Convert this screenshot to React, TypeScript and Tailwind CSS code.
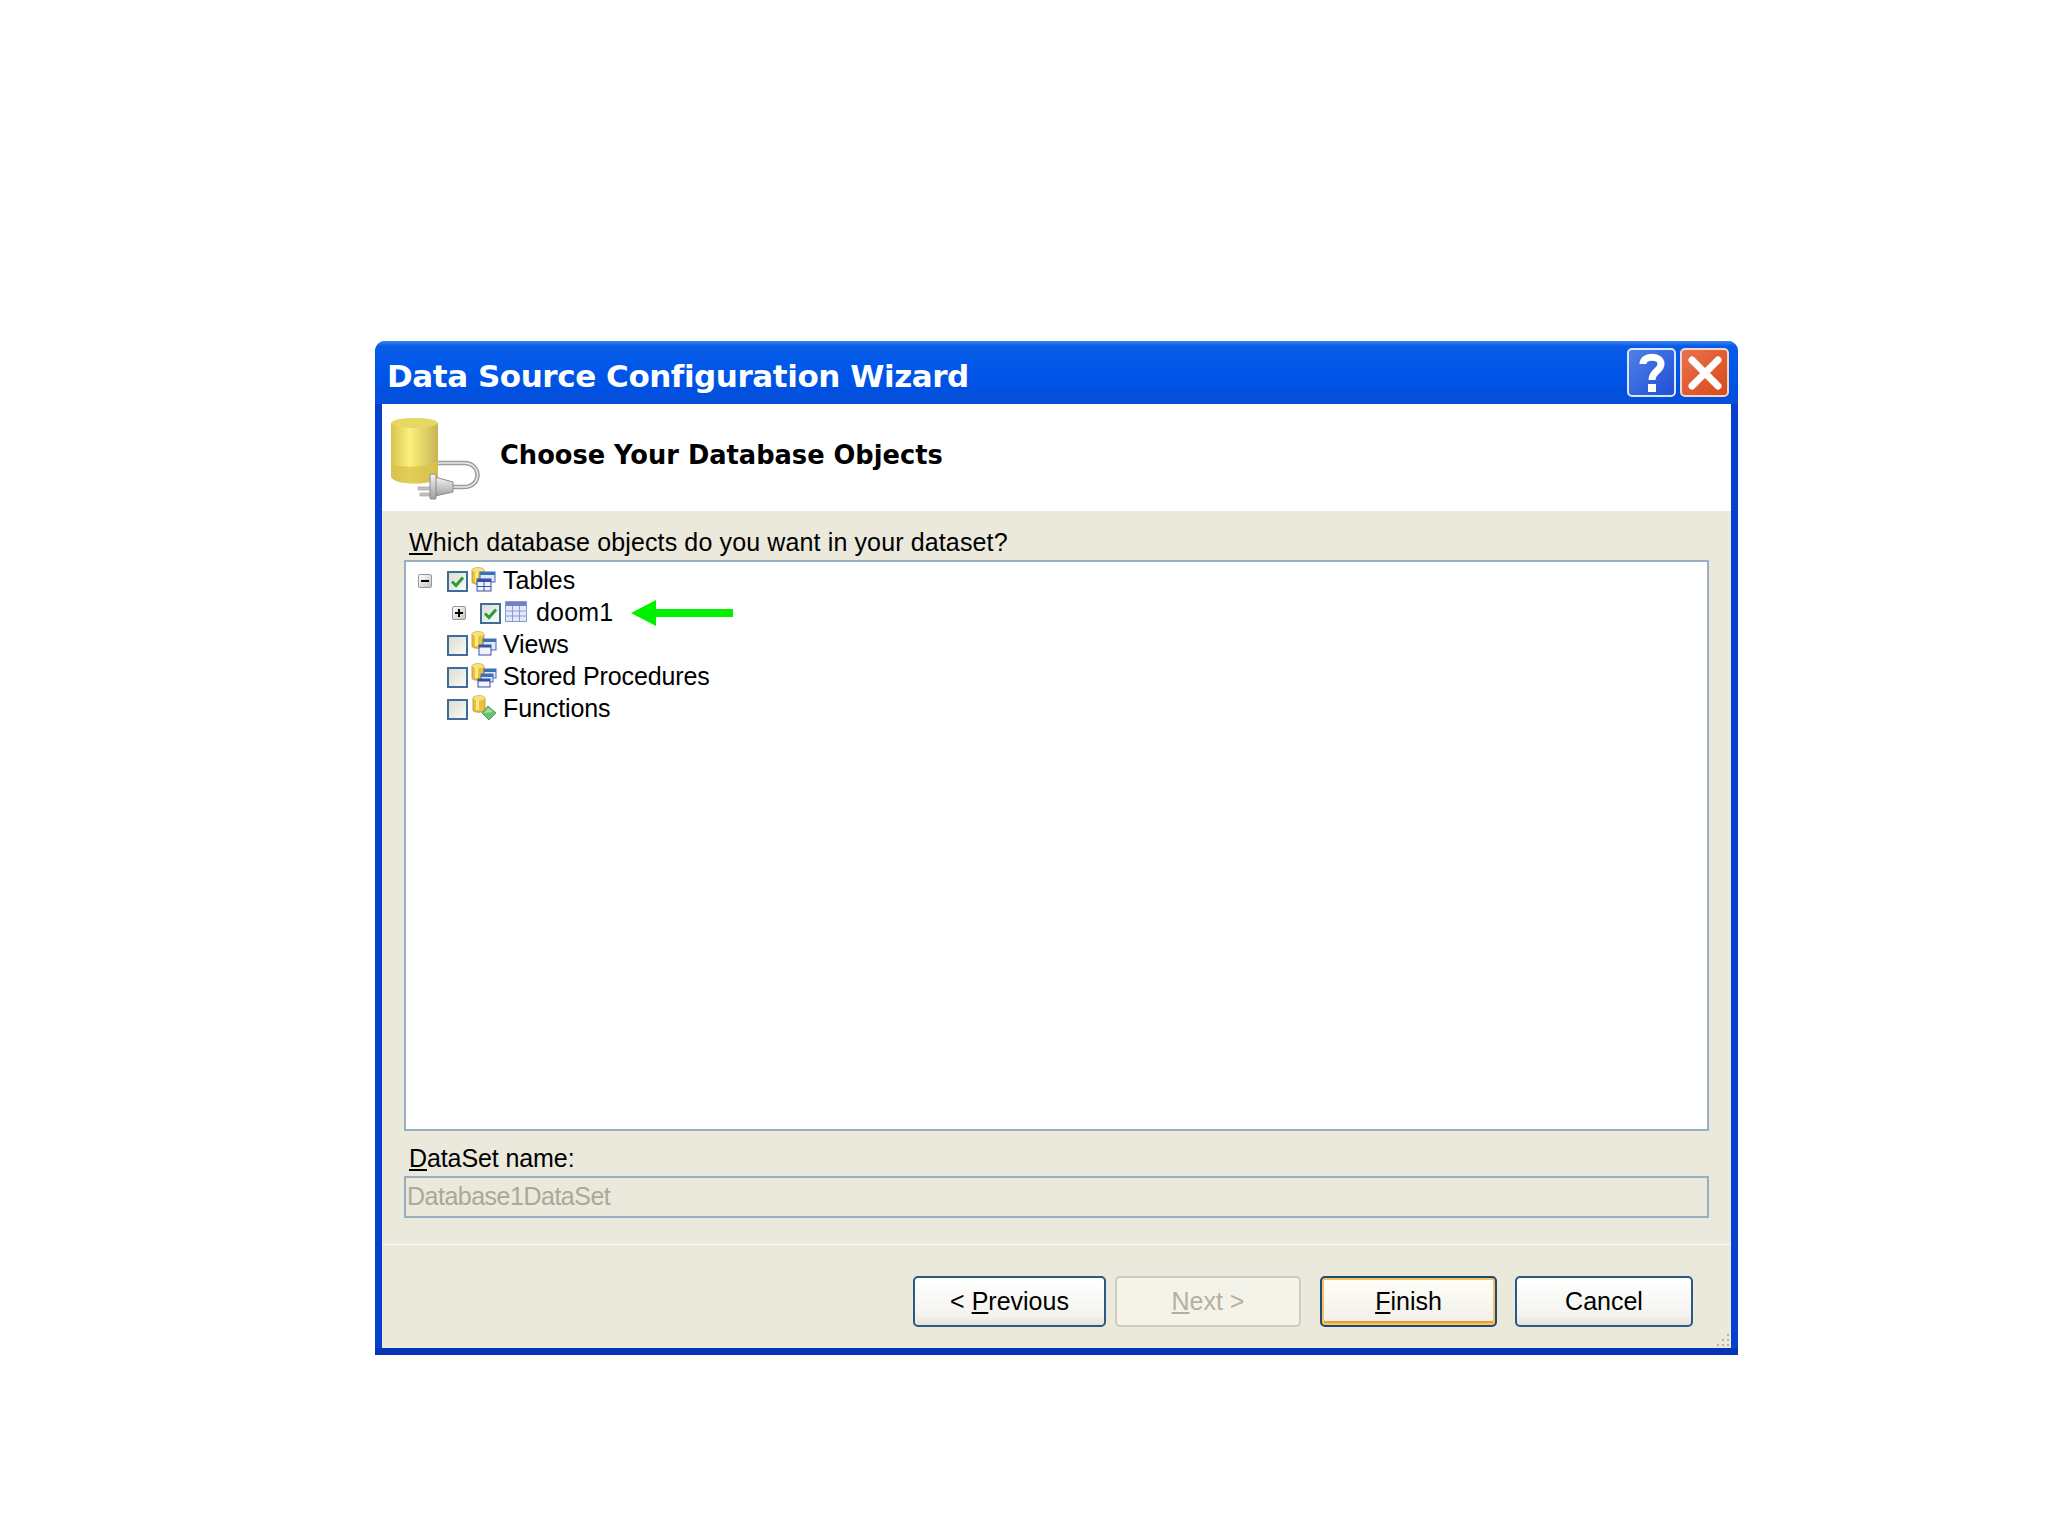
const sans = "font-['Liberation_Sans',Arial,sans-serif]"

// the small yellow database drum shared by all tree icons
function Drum({ x = 0 }: { x?: number }) {
  return (
    <g transform={`translate(${x} 0)`}>
      <path d="M1 3 C1 0 13 0 13 3 V15 C13 18 1 18 1 15 Z" fill="#ecc23c" stroke="#b8902a" strokeWidth="0.8" />
      <ellipse cx="7" cy="3" rx="6" ry="2.2" fill="#f6e27a" />
      <rect x="4" y="5" width="3" height="10" fill="#fbe98a" />
    </g>
  )
}

function TablesIcon() {
  return (
    <svg width="26" height="26" viewBox="0 0 26 26">
      <Drum />
      <rect x="9" y="5" width="15" height="10" fill="#dbe6f7" stroke="#3f6fb5" />
      <rect x="9" y="5" width="15" height="3" fill="#3f6fb5" />
      <rect x="6" y="12" width="14" height="12" fill="#eef2fb" stroke="#3b4ea8" />
      <rect x="6" y="12" width="14" height="3" fill="#3b4ea8" />
      <path d="M13 15 V24 M6 19.5 H20" stroke="#3b4ea8" />
    </svg>
  )
}

function ViewsIcon() {
  return (
    <svg width="26" height="26" viewBox="0 0 26 26">
      <Drum />
      <rect x="12" y="8" width="13" height="11" fill="#dfe8f8" stroke="#3f6fb5" />
      <rect x="12" y="8" width="13" height="3" fill="#3f6fb5" />
      <rect x="8" y="14" width="12" height="10" fill="#f2f4fc" stroke="#3b4ea8" />
      <rect x="8" y="14" width="12" height="2.5" fill="#3b4ea8" />
    </svg>
  )
}

function ProcsIcon() {
  return (
    <svg width="26" height="26" viewBox="0 0 26 26">
      <Drum />
      <rect x="13" y="6" width="12" height="9" fill="#dfe8f8" stroke="#3f6fb5" />
      <rect x="13" y="6" width="12" height="3" fill="#3f6fb5" />
      <rect x="10" y="11" width="12" height="8" fill="#dfe8f8" stroke="#3f6fb5" />
      <rect x="10" y="11" width="12" height="3" fill="#3f6fb5" />
      <rect x="7" y="16" width="12" height="8" fill="#f2f4fc" stroke="#3b4ea8" />
      <rect x="7" y="16" width="12" height="2.5" fill="#3b4ea8" />
    </svg>
  )
}

function FunctionsIcon() {
  return (
    <svg width="26" height="26" viewBox="0 0 26 26">
      <Drum x={1} />
      <path d="M17 11 L25 18 L18 25 L11 18 Z" fill="#6fbf73" stroke="#3c8f4a" strokeWidth="0.8" />
      <path d="M13 18 L17 13 L22 17" fill="#a5e0a0" />
    </svg>
  )
}

function TableIcon() {
  return (
    <svg width="22" height="21" viewBox="0 0 22 21">
      <rect x="0.5" y="0.5" width="21" height="20" fill="#e4e9f8" stroke="#8a9bd0" />
      <rect x="1" y="1" width="20" height="4" fill="#6f83c6" />
      <path d="M7.5 5 V20 M14.5 5 V20 M1 10 H21 M1 15 H21" stroke="#8a9bd0" />
    </svg>
  )
}

function CheckBox({ checked }: { checked?: boolean }) {
  return (
    <span className="flex h-[21px] w-[21px] shrink-0 items-center justify-center border-2 border-[#3c6e98] bg-[linear-gradient(135deg,#dcdcd4,#fbfbf8)]">
      {checked && (
        <svg width="15" height="13" viewBox="0 0 15 13">
          <path d="M2 6.5 L6 10.5 L13 2.5" fill="none" stroke="#2f9a3c" strokeWidth="3" />
        </svg>
      )}
    </span>
  )
}

function Expander({ open }: { open?: boolean }) {
  return (
    <span className="relative block h-[14px] w-[14px] shrink-0 rounded-[2px] border border-[#8d9aa6] bg-[linear-gradient(135deg,#ffffff,#c8c4b6)]">
      <span className="absolute left-[2px] top-[5px] h-[2px] w-2 bg-black" />
      {!open && <span className="absolute left-[5px] top-[2px] h-2 w-[2px] bg-black" />}
    </span>
  )
}

const treeRows = [
  { label: 'Views', icon: <ViewsIcon /> },
  { label: 'Stored Procedures', icon: <ProcsIcon /> },
  { label: 'Functions', icon: <FunctionsIcon /> },
]

function DbPlug() {
  return (
    <svg width="92" height="84" viewBox="0 0 92 84">
      <defs>
        <linearGradient id="drum" x1="0" x2="1" y1="0" y2="0">
          <stop offset="0" stopColor="#d8c24e" />
          <stop offset="0.4" stopColor="#fbf27c" />
          <stop offset="1" stopColor="#c9b356" />
        </linearGradient>
        <linearGradient id="metal" x1="0" x2="0" y1="0" y2="1">
          <stop offset="0" stopColor="#f4f4f4" />
          <stop offset="1" stopColor="#a0a0a0" />
        </linearGradient>
      </defs>
      <path d="M1 8 C1 0 48 0 48 8 V60 C48 70 1 70 1 60 Z" fill="url(#drum)" />
      <path d="M1 48 C12 52 36 52 48 45 V60 C48 70 1 70 1 60 Z" fill="#d9c24a" opacity="0.75" />
      <ellipse cx="24.5" cy="7" rx="23" ry="5" fill="#e6d860" />
      <path d="M48 47 H74 C92 47 92 71 74 71 H62" fill="none" stroke="#9c9c9c" strokeWidth="4.5" />
      <path d="M48 47 H74 C92 47 92 71 74 71 H62" fill="none" stroke="#ececec" strokeWidth="1.5" />
      <rect x="28" y="71" width="13" height="3" fill="#c4c4c4" stroke="#888" strokeWidth="0.5" />
      <rect x="30" y="77" width="11" height="3" fill="#c4c4c4" stroke="#888" strokeWidth="0.5" />
      <path d="M45 61 L63 66 V76 L45 80 Z" fill="url(#metal)" stroke="#8a8a8a" />
      <rect x="40" y="58" width="6" height="25" rx="1" fill="url(#metal)" stroke="#8a8a8a" />
    </svg>
  )
}

function WizardButton({ w, children, disabled, primary }: { w: string; children: React.ReactNode; disabled?: boolean; primary?: boolean }) {
  return (
    <button
      className={`flex h-[51px] items-center justify-center rounded-[5px] border-2 text-[25px] ${w} ${
        disabled
          ? 'border-[#cfccbe] bg-[#f4f3ea] text-[#b3b0a0]'
          : primary
          ? 'border-[#1f4a78] bg-[linear-gradient(#fffef8,#f0efe8)] text-black shadow-[inset_0_0_0_2px_#f6c45c,inset_0_-2px_0_2px_#e8a030]'
          : 'border-[#2a5a86] bg-[linear-gradient(#ffffff,#f4f3ee_80%,#e4e2d8)] text-black'
      }`}
    >
      {children}
    </button>
  )
}

export default function App() {
  return (
    <div className={`min-h-screen bg-white pl-[375px] pt-[341px] ${sans}`}>
      <div className="flex h-[1014px] w-[1363px] flex-col overflow-hidden rounded-t-[10px] bg-[#0640cc]">
        {/* Title bar */}
        <div className="flex h-[63px] shrink-0 items-center justify-between bg-[linear-gradient(#3a86f0_0,#0a5ce6_8%,#0058ea_40%,#0050e0_80%,#0a4fd8)] pl-[12px] pr-[9px]">
          <span className="pt-[7px] font-['DejaVu_Sans',sans-serif] text-[31px] font-bold leading-none tracking-[-0.44px] text-white">
            Data Source Configuration Wizard
          </span>
          <div className="flex gap-1">
            <span className="flex h-[49px] w-[49px] items-center justify-center rounded-[5px] border-2 border-[#dbe6fa] bg-[linear-gradient(135deg,#4f7fe6,#1f50d8)]">
              <svg width="28" height="40" viewBox="0 0 28 40">
                <path d="M5 11 C5 2 23 2 23 11 C23 18 14 18 14 27" fill="none" stroke="#fff" strokeWidth="7" />
                <rect x="10" y="31" width="8" height="8" fill="#fff" />
              </svg>
            </span>
            <span className="flex h-[49px] w-[49px] items-center justify-center rounded-[5px] border-2 border-[#f2d6cc] bg-[linear-gradient(135deg,#e8724e,#d84a16)]">
              <svg width="34" height="34" viewBox="0 0 34 34">
                <path d="M4 4 L30 30 M30 4 L4 30" stroke="#fff" strokeWidth="7" strokeLinecap="round" />
              </svg>
            </span>
          </div>
        </div>

        {/* Body */}
        <div className="mx-[7px] flex min-h-0 flex-1 flex-col">
          <div className="flex h-[107px] shrink-0 items-center bg-white pl-[8px]">
            <DbPlug />
            <span className="mb-[5px] ml-[18px] font-['DejaVu_Sans',sans-serif] text-[25.7px] font-bold text-black">
              Choose Your Database Objects
            </span>
          </div>

          <div className="flex min-h-0 flex-1 flex-col bg-[#ebe8dc]">
            <div className="px-[22px]">
              <div className="flex h-[49px] items-end pb-[5px] pl-[5px] text-[25px] leading-none tracking-[0.13px] text-black">
                <span><u>W</u>hich database objects do you want in your dataset?</span>
              </div>
              <div className="h-[571px] border-2 border-[#9aaec2] bg-white pl-[12px] pt-[3px] text-[25px] text-black">
                <div className="flex h-[32px] items-center">
                  <Expander open />
                  <span className="ml-[15px]"><CheckBox checked /></span>
                  <span className="mb-[3px] ml-[3px]"><TablesIcon /></span>
                  <span className="ml-[6px]">Tables</span>
                </div>
                <div className="flex h-[32px] items-center pl-[34px]">
                  <Expander />
                  <span className="ml-[14px]"><CheckBox checked /></span>
                  <span className="mb-[4px] ml-[4px]"><TableIcon /></span>
                  <span className="ml-[9px] tracking-[0.2px]">doom1</span>
                  <svg className="mb-[1px] ml-[18px]" width="102" height="26" viewBox="0 0 102 26">
                    <path d="M0 13 L25 0 V9 H102 V17 H25 V26 Z" fill="#00f000" />
                  </svg>
                </div>
                {treeRows.map(row => (
                  <div key={row.label} className="flex h-[32px] items-center pl-[29px]">
                    <CheckBox />
                    <span className="mb-[3px] ml-[3px]">{row.icon}</span>
                    <span className="ml-[6px] tracking-[-0.1px]">{row.label}</span>
                  </div>
                ))}
              </div>
              <div className="flex h-[45px] items-end pb-[5px] pl-[5px] text-[25px] leading-none tracking-[-0.1px] text-black">
                <span><u>D</u>ataSet name:</span>
              </div>
              <div className="flex h-[42px] items-center border-2 border-[#9aaec2] pl-[1px] text-[25px] tracking-[-0.5px] text-[#aca899]">
                Database1DataSet
              </div>
            </div>

            <div className="mt-[26px] h-[1px] bg-[#fbfaf5]" />

            <div className="relative flex flex-1 items-start justify-end pr-[38px] pt-[31px]">
              <WizardButton w="w-[193px]">&lt;&nbsp;<u>P</u>revious</WizardButton>
              <span className="ml-[9px]">
                <WizardButton w="w-[186px]" disabled><span><u>N</u>ext &gt;</span></WizardButton>
              </span>
              <span className="ml-[19px]">
                <WizardButton w="w-[177px]" primary><span><u>F</u>inish</span></WizardButton>
              </span>
              <span className="ml-[18px]">
                <WizardButton w="w-[178px]">Cancel</WizardButton>
              </span>
              {/* size grip */}
              <svg className="absolute bottom-0 right-0" width="16" height="16" viewBox="0 0 16 16">
                <path d="M12 2h2v2h-2z M7 7h2v2H7z M12 7h2v2h-2z M2 12h2v2H2z M7 12h2v2H7z M12 12h2v2h-2z" fill="#b5b2a4" />
              </svg>
            </div>
          </div>
        </div>
        <div className="h-[7px] shrink-0 bg-[#0434b8]" />
      </div>
    </div>
  )
}
